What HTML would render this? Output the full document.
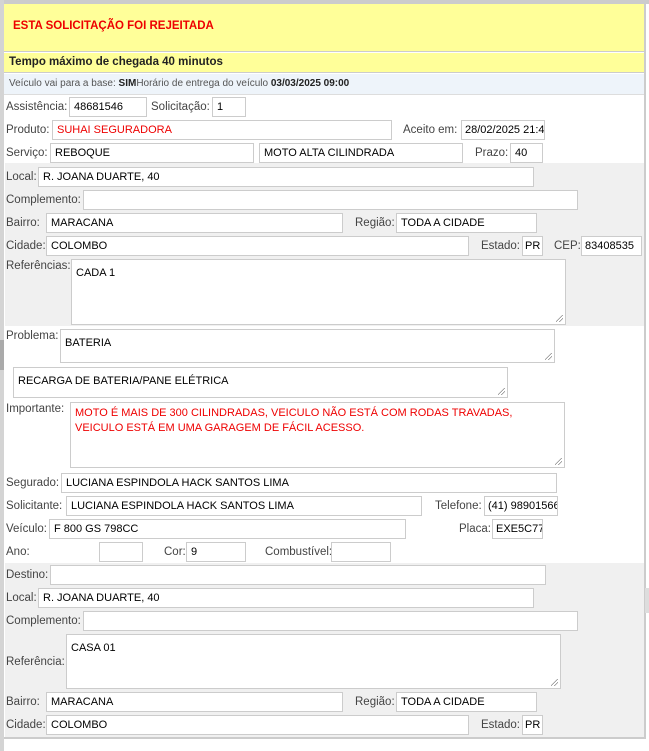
<!DOCTYPE html>
<html><head><meta charset="utf-8"><style>
*{box-sizing:border-box;margin:0;padding:0}
body{width:649px;height:751px;background:#fff;position:relative;overflow:hidden;font-family:"Liberation Sans",Arial,sans-serif;font-size:11px;color:#333}
.a{position:absolute}
.l{position:absolute;font-size:11.5px;color:#444;white-space:nowrap;line-height:20px}
.i{position:absolute;border:1px solid #ccc;background:#fff;height:20px;font-size:11px;color:#000;padding:0 4px;line-height:18px;white-space:nowrap;overflow:hidden}
.t{position:absolute;border:1px solid #ccc;background:#fff;font-size:11px;color:#000;padding:6px 4px;line-height:15px}
.t:after{content:"";position:absolute;right:2px;bottom:2px;width:7px;height:7px;background:linear-gradient(135deg,transparent 45%,#888 45%,#888 52%,transparent 52%,transparent 70%,#888 70%,#888 77%,transparent 77%)}
</style></head><body>
<div class="a" style="left:0;top:0;width:649px;height:4px;background:#ccc"></div>
<div class="a" style="left:0;top:0;width:4px;height:751px;background:#d4d4d4"></div>
<div class="a" style="left:0;top:340px;width:4px;height:30px;background:#aaa"></div>
<div class="a" style="left:644px;top:0;width:2px;height:739px;background:#ccc"></div>
<div class="a" style="left:645px;top:588px;width:4px;height:25px;background:#ddd"></div>
<div class="a" style="left:4px;top:737px;width:642px;height:2px;background:#ccc"></div>
<div class="a" style="left:4px;top:4px;width:640px;height:48px;background:#ffff99;border-bottom:1px solid #ccc"></div>
<div class="a" style="left:13px;top:20px;font-weight:bold;color:#e00;font-size:11.5px">ESTA SOLICITAÇÃO FOI REJEITADA</div>
<div class="a" style="left:4px;top:53px;width:640px;height:20px;background:#ffff99;border-bottom:1px solid #ccc"></div>
<div class="a" style="left:9px;top:56px;font-weight:bold;color:#222;font-size:11.5px">Tempo máximo de chegada 40 minutos</div>
<div class="a" style="left:4px;top:74px;width:640px;height:21px;background:#eef4fa;border-bottom:1px solid #ddd"></div>
<div class="a" style="left:9px;top:78px;font-size:10px;color:#555">Veículo vai para a base: <b style="color:#222">SIM</b>Horário de entrega do veículo <b style="color:#222">03/03/2025 09:00</b></div>

<div class="a" style="left:5px;top:163px;width:639px;height:163px;background:#f0f0f0"></div>
<div class="a" style="left:5px;top:563px;width:639px;height:174px;background:#f0f0f0"></div>

<div class="l" style="left:6px;top:97px">Assistência:</div><div class="i" style="left:69px;top:97px;width:78px">48681546</div>
<div class="l" style="left:151px;top:97px">Solicitação:</div><div class="i" style="left:212px;top:97px;width:34px">1</div>
<div class="l" style="left:6px;top:120px">Produto:</div><div class="i" style="left:52px;top:120px;width:340px;color:#e00">SUHAI SEGURADORA</div>
<div class="l" style="left:403px;top:120px">Aceito em:</div><div class="i" style="left:461px;top:120px;width:84px;padding:0 3px">28/02/2025 21:40</div>
<div class="l" style="left:6px;top:143px">Serviço:</div><div class="i" style="left:50px;top:143px;width:204px">REBOQUE</div>
<div class="i" style="left:259px;top:143px;width:204px">MOTO ALTA CILINDRADA</div>
<div class="l" style="left:475px;top:143px">Prazo:</div><div class="i" style="left:510px;top:143px;width:33px">40</div>

<div class="l" style="left:6px;top:167px">Local:</div><div class="i" style="left:38px;top:167px;width:496px">R. JOANA DUARTE, 40</div>
<div class="l" style="left:6px;top:190px">Complemento:</div><div class="i" style="left:83px;top:190px;width:495px"></div>
<div class="l" style="left:6px;top:213px">Bairro:</div><div class="i" style="left:46px;top:213px;width:297px">MARACANA</div>
<div class="l" style="left:355px;top:213px">Região:</div><div class="i" style="left:396px;top:213px;width:141px">TODA A CIDADE</div>
<div class="l" style="left:6px;top:236px">Cidade:</div><div class="i" style="left:46px;top:236px;width:423px">COLOMBO</div>
<div class="l" style="left:481px;top:236px">Estado:</div><div class="i" style="left:522px;top:236px;width:21px;padding:0 2px">PR</div>
<div class="l" style="left:554px;top:236px">CEP:</div><div class="i" style="left:581px;top:236px;width:61px;padding:0 3px">83408535</div>
<div class="l" style="left:6px;top:256px">Referências:</div><div class="t" style="left:71px;top:259px;width:495px;height:66px">CADA 1</div>

<div class="l" style="left:6px;top:326px">Problema:</div><div class="t" style="left:60px;top:329px;width:495px;height:34px">BATERIA</div>
<div class="t" style="left:13px;top:367px;width:495px;height:31px">RECARGA DE BATERIA/PANE ELÉTRICA</div>
<div class="l" style="left:6px;top:399px">Importante:</div><div class="t" style="left:70px;top:402px;width:495px;height:66px;color:#e00;padding-top:3px">MOTO É MAIS DE 300 CILINDRADAS, VEICULO NÃO ESTÁ COM RODAS TRAVADAS, VEICULO ESTÁ EM UMA GARAGEM DE FÁCIL ACESSO.</div>

<div class="l" style="left:6px;top:473px">Segurado:</div><div class="i" style="left:61px;top:473px;width:496px">LUCIANA ESPINDOLA HACK SANTOS LIMA</div>
<div class="l" style="left:6px;top:496px">Solicitante:</div><div class="i" style="left:66px;top:496px;width:356px">LUCIANA ESPINDOLA HACK SANTOS LIMA</div>
<div class="l" style="left:435px;top:496px">Telefone:</div><div class="i" style="left:484px;top:496px;width:74px;padding:0 3px">(41) 989015660</div>
<div class="l" style="left:6px;top:519px">Veículo:</div><div class="i" style="left:49px;top:519px;width:357px">F 800 GS 798CC</div>
<div class="l" style="left:459px;top:519px">Placa:</div><div class="i" style="left:492px;top:519px;width:51px;padding:0 3px">EXE5C77</div>
<div class="l" style="left:6px;top:542px">Ano:</div><div class="i" style="left:99px;top:542px;width:44px"></div>
<div class="l" style="left:164px;top:542px">Cor:</div><div class="i" style="left:186px;top:542px;width:60px">9</div>
<div class="l" style="left:265px;top:542px">Combustível:</div><div class="i" style="left:331px;top:542px;width:60px"></div>

<div class="l" style="left:6px;top:565px">Destino:</div><div class="i" style="left:50px;top:565px;width:496px"></div>
<div class="l" style="left:6px;top:588px">Local:</div><div class="i" style="left:38px;top:588px;width:496px">R. JOANA DUARTE, 40</div>
<div class="l" style="left:6px;top:611px">Complemento:</div><div class="i" style="left:83px;top:611px;width:495px"></div>
<div class="l" style="left:6px;top:652px">Referência:</div><div class="t" style="left:66px;top:634px;width:495px;height:55px">CASA 01</div>
<div class="l" style="left:6px;top:692px">Bairro:</div><div class="i" style="left:46px;top:692px;width:297px">MARACANA</div>
<div class="l" style="left:355px;top:692px">Região:</div><div class="i" style="left:396px;top:692px;width:141px">TODA A CIDADE</div>
<div class="l" style="left:6px;top:715px">Cidade:</div><div class="i" style="left:46px;top:715px;width:423px">COLOMBO</div>
<div class="l" style="left:481px;top:715px">Estado:</div><div class="i" style="left:522px;top:715px;width:21px;padding:0 2px">PR</div>
</body></html>
